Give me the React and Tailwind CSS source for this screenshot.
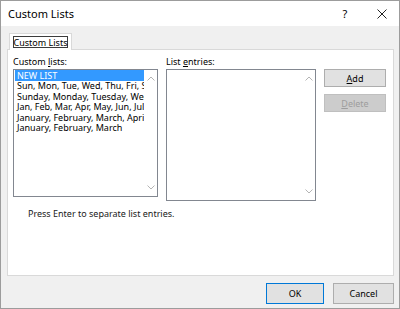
import React from "react";

const font = { fontFamily: '"Noto Sans", "Open Sans", sans-serif' };

function UpArrow() {
  return (
    <svg width="8" height="5" viewBox="0 0 8 5" className="block">
      <path d="M0.5 4.5 L4 1 L7.5 4.5" fill="none" stroke="#b4b4b4" strokeWidth="1" />
    </svg>
  );
}
function DownArrow() {
  return (
    <svg width="8" height="5" viewBox="0 0 8 5" className="block">
      <path d="M0.5 0.5 L4 4 L7.5 0.5" fill="none" stroke="#b4b4b4" strokeWidth="1" />
    </svg>
  );
}

function ScrollBar() {
  return (
    <div className="w-[13px] flex flex-col items-center justify-between py-[6px] bg-white">
      <UpArrow />
      <DownArrow />
    </div>
  );
}

export default function App() {
  const items = [
    "Sun, Mon, Tue, Wed, Thu, Fri, Sat",
    "Sunday, Monday, Tuesday, Wednesday, Thursday, Friday, Saturday",
    "Jan, Feb, Mar, Apr, May, Jun, Jul, Aug, Sep, Oct, Nov, Dec",
    "January, February, March, April, May, June, July",
    "January, February, March",
  ];
  return (
    <div style={font} className="w-[400px] h-[309px] border border-[#9c9c9c] bg-[#f0f0f0] flex flex-col overflow-hidden text-black">
      {/* Title bar */}
      <div className="h-[25px] bg-white flex items-center shrink-0">
        <span className="pl-[7px] text-[11px] leading-none">Custom Lists</span>
        <div className="flex-1" />
        <span className="text-[11px] leading-none w-[14px] text-center mr-[25px]">?</span>
        <svg width="10" height="10" viewBox="0 0 10 10" className="mr-[12px]">
          <path d="M0.5 0.5 L9.5 9.5 M9.5 0.5 L0.5 9.5" stroke="#222" strokeWidth="1" />
        </svg>
      </div>

      {/* Body */}
      <div className="flex-1 flex flex-col pl-[6px] pr-[5px]">
        {/* Tab strip */}
        <div className="h-[23px] flex items-end pl-[2px]">
          <div className="relative z-10 h-[17px] w-[63px] bg-white border border-b-0 border-[#d9d9d9] flex items-center justify-center -mb-[1px]">
            <div className="h-[12px] w-[55px] border border-[#3c3c3c] flex items-center justify-center text-[9px] leading-none whitespace-nowrap">
              Custom Lists
            </div>
          </div>
        </div>

        {/* Panel */}
        <div className="h-[227px] bg-white border border-[#d9d9d9] flex flex-col px-[5px] pt-[5px]">
          <div className="flex gap-[8px]">
            {/* Left column */}
            <div className="flex flex-col w-[145px]">
              <div className="text-[9px] leading-[13px] h-[13px] mb-[1px]">
                Custom <u>l</u>ists:
              </div>
              <div className="h-[128px] border border-[#828790] flex">
                <div className="flex-1 min-w-0 pl-[1px] overflow-hidden">
                  <div className="h-[11px] bg-[#3399ff] text-white text-[9px] leading-[11px] pl-[2px] whitespace-nowrap">
                    NEW LIST
                  </div>
                  {items.map((t) => (
                    <div key={t} className="h-[10.6px] text-[9px] leading-[10.6px] pl-[2px] whitespace-nowrap overflow-hidden">
                      {t}
                    </div>
                  ))}
                </div>
                <ScrollBar />
              </div>
            </div>

            {/* Middle column */}
            <div className="flex flex-col w-[150px]">
              <div className="text-[9px] leading-[13px] h-[13px] mb-[1px]">
                List <u>e</u>ntries:
              </div>
              <div className="h-[132px] border border-[#828790] flex">
                <div className="flex-1" />
                <ScrollBar />
              </div>
            </div>

            {/* Buttons */}
            <div className="flex flex-col pt-[14px] gap-[7px]">
              <div className="w-[62px] h-[18px] bg-[#e1e1e1] border border-[#adadad] flex items-center justify-center text-[9px] leading-none">
                <span><u>A</u>dd</span>
              </div>
              <div className="w-[62px] h-[18px] bg-[#cccccc] border border-[#bfbfbf] flex items-center justify-center text-[9px] leading-none text-[#9d9d9d]">
                <span><u>D</u>elete</span>
              </div>
            </div>
          </div>
          <div className="mt-[6px] pl-[15px] text-[9px] leading-[13px] text-[#1a1a1a]">
            Press Enter to separate list entries.
          </div>
        </div>

        {/* Footer */}
        <div className="flex justify-end gap-[9px] pt-[7px]">
          <div className="w-[58px] h-[21px] bg-[#e1e1e1] border border-[#0078d7] flex items-center justify-center text-[9px] leading-none">
            OK
          </div>
          <div className="w-[61px] h-[21px] bg-[#e1e1e1] border border-[#adadad] flex items-center justify-center text-[9px] leading-none">
            Cancel
          </div>
        </div>
      </div>
    </div>
  );
}
